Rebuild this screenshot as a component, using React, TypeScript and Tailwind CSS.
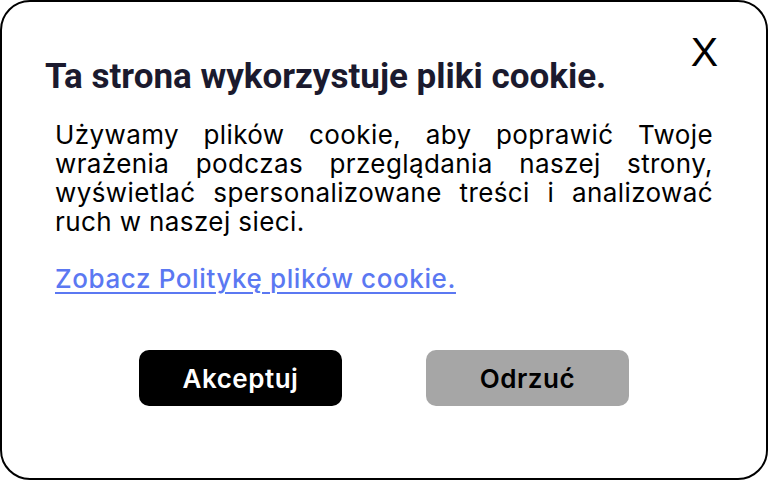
export default function App() {
  const lines = [
    "Używamy plików cookie, aby poprawić Twoje",
    "wrażenia podczas przeglądania naszej strony,",
    "wyświetlać spersonalizowane treści i analizować",
  ];

  return (
    <div className="w-[768px] h-[480px] bg-white">
      <div
        className="w-full h-full border-2 border-black rounded-[30px] bg-white flex flex-col"
        style={{ fontFamily: 'Inter, "DejaVu Sans", sans-serif' }}
      >
        {/* header */}
        <div className="flex justify-between items-start pl-[43px] pr-[48px] pt-[33px]">
          <h1
            className="mt-[22px] text-[35px] leading-[40px] font-bold text-[#1b1a2e]"
            style={{ fontFamily: "Roboto, sans-serif" }}
          >
            Ta strona wykorzystuje pliki cookie.
          </h1>
          <button
            className="-mt-[3px] text-[41px] leading-[40px] text-black"
            style={{ fontFamily: '"Liberation Sans", Arial, sans-serif' }}
          >
            X
          </button>
        </div>

        {/* body text */}
        <div className="mt-[23px] px-[53px] text-[26px] leading-[29px] tracking-[0.4px] text-black">
          {lines.map((l, i) => (
            <div key={i} className="whitespace-nowrap text-justify [text-align-last:justify]">
              {l}
            </div>
          ))}
          <div>ruch w naszej sieci.</div>
        </div>

        <div className="mt-[28px] px-[53px]">
          <a
            href="#"
            className="text-[26px] leading-[29px] tracking-[0.6px] font-medium text-[#5b78f2] underline underline-offset-[4px] decoration-2"
          >
            Zobacz Politykę plików cookie.
          </a>
        </div>

        {/* buttons */}
        <div className="mt-[56px] flex justify-center gap-[84px]">
          <button className="w-[203px] h-[56px] rounded-[10px] bg-black text-white text-[26px] tracking-[0.5px] font-semibold">
            Akceptuj
          </button>
          <button className="w-[203px] h-[56px] rounded-[10px] bg-[#a6a6a6] text-black text-[26px] tracking-[0.5px] font-semibold">
            Odrzuć
          </button>
        </div>
      </div>
    </div>
  );
}
